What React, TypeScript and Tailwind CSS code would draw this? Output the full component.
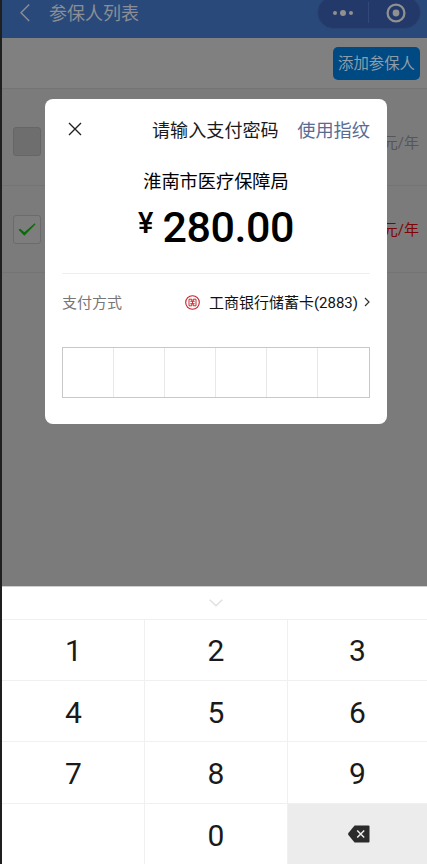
import React from 'react';

const keys = ['1', '2', '3', '4', '5', '6', '7', '8', '9', '', '0', 'del'];

function Capsule() {
  return (
    <div className="w-[104px] h-[33px] -mt-1 rounded-full bg-[#22396a] border border-[#2b4473] flex items-center">
      <div className="w-[50px] flex items-center justify-center gap-[3px]">
        <span className="w-1 h-1 rounded-full bg-[#909090]" />
        <span className="w-[6px] h-[6px] rounded-full bg-[#909090]" />
        <span className="w-1 h-1 rounded-full bg-[#909090]" />
      </div>
      <div className="w-px h-[21px] bg-[#30497a]" />
      <div className="flex-1 flex justify-center pl-[2px]">
        <svg width="20" height="20" viewBox="0 0 20 20" fill="none">
          <circle cx="10" cy="10" r="8.4" stroke="#909090" strokeWidth="2.3" />
          <circle cx="10" cy="10" r="3.4" fill="#909090" />
        </svg>
      </div>
    </div>
  );
}

function InsuredList() {
  return (
    <div className="h-[586px] flex flex-col bg-[#7b7b7b]">
      {/* HEADER */}
      <div className="h-[38px] shrink-0 flex items-start justify-between bg-[#2a497b] pl-[17px] pr-[6px]">
        <div className="flex items-center h-[26px]">
          <svg width="12" height="20" viewBox="0 0 12 20" fill="none" className="mt-[-1px]">
            <path d="M10.2 1.5L2 9.8L10.2 18.1" stroke="#8b8e94" strokeWidth="1.4" />
          </svg>
          <span className="ml-[18px] mt-[2px] text-[18px] leading-[26px] text-[#8b8e94]">参保人列表</span>
        </div>
        <Capsule />
      </div>

      {/* TOOLBAR */}
      <div className="h-[51px] shrink-0 flex items-center justify-end bg-[#808080] border-b border-[#747474] pr-[7px]">
        <button className="w-[87px] h-[33px] rounded-[5px] bg-[#004a84] text-[#8e9da9] text-[15.4px] leading-[35px] whitespace-nowrap">添加参保人</button>
      </div>

      {/* ROWS */}
      <div className="h-[97px] shrink-0 flex items-center justify-between border-b border-[#747474] pl-[11px] pr-2 pt-[9px]">
        <div className="w-[28px] h-[29px] rounded-[3px] bg-[#6e6e6e] border border-[#666]" />
        <span className="text-[15px] text-[#55555b] mt-[3px]">280元/年</span>
      </div>
      <div className="h-[87px] shrink-0 flex items-center justify-between border-b border-[#747474] pl-[11px] pr-2">
        <div className="w-[28px] h-[29px] rounded-[3px] bg-[#7d7d7d] border border-[#6b6b6b] flex items-center justify-center">
          <svg width="18" height="13" viewBox="0 0 18 13">
            <path d="M0.5 6.7L2.2 5.7L6.4 9.3L16.8 0.3L17.5 1.3L6.3 12.8Z" fill="#086c08" />
          </svg>
        </div>
        <span className="text-[15px] text-[#7d0505] mt-[2px]">280元/年</span>
      </div>
    </div>
  );
}

function PayDialog() {
  return (
    <div className="absolute left-[43px] top-[99px] w-[342px] h-[325px] rounded-[8px] bg-white px-[17px] text-[#000]">
      <div className="h-[62px] flex items-center">
        <svg width="14" height="14" viewBox="0 0 14 14" fill="none" className="ml-[6px] mt-[-2px]">
          <path d="M1 1L13 13M13 1L1 13" stroke="#222" strokeWidth="1.4" />
        </svg>
        <span className="ml-[70px] mt-px text-[18.1px] text-[#1a1a1a]">请输入支付密码</span>
        <span className="ml-auto mt-px text-[18.2px] text-[#576b95]">使用指纹</span>
      </div>
      <div className="h-[40px] text-center text-[18.2px] leading-[42px]">淮南市医疗保障局</div>
      <div className="h-[73px] flex justify-center items-start border-b border-[#efefef] font-['Roboto',sans-serif] font-medium">
        <span className="text-[29px] leading-[45px]">¥</span>
        <span className="ml-[9px] text-[43px] leading-[52px] tracking-[-0.45px]">280.00</span>
      </div>
      <div className="h-[57px] flex items-center">
        <span className="mt-[2px] text-[15px] text-[#777]">支付方式</span>
        <svg width="15" height="15" viewBox="0 0 15 15" fill="none" className="ml-auto mt-[-1px]" stroke="#cb2028">
          <circle cx="7.5" cy="7.5" r="6.8" strokeWidth="1.1" />
          <path d="M6.8 6.2V4.2H4V10.8H6.8V8.8M8.2 6.2V4.2H11V10.8H8.2V8.8M5.3 6.3H9.7M5.3 8.7H9.7M7.5 6.3V8.7" strokeWidth="0.95" />
        </svg>
        <span className="ml-[9px] mt-[2px] text-[15px] text-[#111]">工商银行储蓄卡(2883)</span>
        <svg width="6" height="10" viewBox="0 0 6 10" fill="none" className="ml-[6px] mt-[-2px]">
          <path d="M1 1L5 5L1 9" stroke="#333" strokeWidth="1.2" />
        </svg>
      </div>
      <div className="mt-[16px] h-[51px] grid grid-cols-6 border border-[#c8c8c8] divide-x divide-[#e8e8e8]">
        {[0, 1, 2, 3, 4, 5].map((i) => (
          <div key={i} />
        ))}
      </div>
    </div>
  );
}

function Keypad() {
  return (
    <div className="h-[278px] bg-white flex flex-col border-t border-[#d0d0d0]">
      <div className="h-[32px] flex items-center justify-center pl-[2px]">
        <svg width="14" height="8" viewBox="0 0 14 8" fill="none">
          <path d="M0.7 0.8L7 6.8L13.3 0.8" stroke="#e0e0e0" strokeWidth="1.5" />
        </svg>
      </div>
      <div className="flex-1 grid grid-cols-[142px_143px_1fr] grid-rows-[61px_61px_62px_61px] font-['Roboto',sans-serif] text-[30px] text-[#1a1a1a]">
        {keys.map((k, i) => (
          <div
            key={i}
            className={`flex items-center justify-center border-t border-[#f0f0f0] ${i % 3 ? 'border-l' : 'pl-[1px]'} ${k === 'del' ? 'bg-[#ececec]' : ''}`}
          >
            {k === 'del' ? (
              <svg width="22" height="18" viewBox="0 0 22 18" fill="none" className="mr-[-2px]">
                <path d="M6.6 0.5H20.5Q21.5 0.5 21.5 1.5V16.5Q21.5 17.5 20.5 17.5H6.6L0.4 10Q-0.2 9 0.4 8Z" fill="#2b2b2b" />
                <path d="M9.2 5.5L16.2 12.5M16.2 5.5L9.2 12.5" stroke="#ececec" strokeWidth="1.5" />
              </svg>
            ) : (
              <span className={i > 2 ? 'pt-[2px]' : ''}>{k}</span>
            )}
          </div>
        ))}
      </div>
    </div>
  );
}

export default function App() {
  return (
    <div className="w-[427px] h-[864px] overflow-hidden bg-[#1f1f1f] pl-[2px] font-['Roboto','Noto_Sans_CJK_SC',sans-serif]">
      <div className="relative h-full">
        <InsuredList />
        <PayDialog />
        <Keypad />
      </div>
    </div>
  );
}
